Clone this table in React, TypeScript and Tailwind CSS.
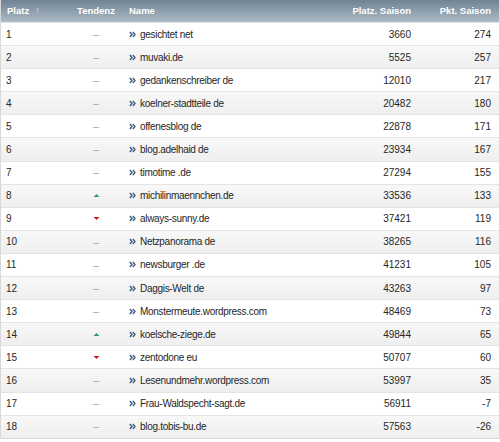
import React from "react";

type Row = { p: number; t: "up" | "down" | "none"; n: string; s: number; k: number };

const rows: Row[] = [
  { p: 1, t: "none", n: "gesichtet net", s: 3660, k: 274 },
  { p: 2, t: "none", n: "muvaki.de", s: 5525, k: 257 },
  { p: 3, t: "none", n: "gedankenschreiber de", s: 12010, k: 217 },
  { p: 4, t: "none", n: "koelner-stadtteile de", s: 20482, k: 180 },
  { p: 5, t: "none", n: "offenesblog de", s: 22878, k: 171 },
  { p: 6, t: "none", n: "blog.adelhaid de", s: 23934, k: 167 },
  { p: 7, t: "none", n: "timotime .de", s: 27294, k: 155 },
  { p: 8, t: "up", n: "michilinmaennchen.de", s: 33536, k: 133 },
  { p: 9, t: "down", n: "always-sunny.de", s: 37421, k: 119 },
  { p: 10, t: "none", n: "Netzpanorama de", s: 38265, k: 116 },
  { p: 11, t: "none", n: "newsburger .de", s: 41231, k: 105 },
  { p: 12, t: "none", n: "Daggis-Welt de", s: 43263, k: 97 },
  { p: 13, t: "none", n: "Monstermeute.wordpress.com", s: 48469, k: 73 },
  { p: 14, t: "up", n: "koelsche-ziege.de", s: 49844, k: 65 },
  { p: 15, t: "down", n: "zentodone eu", s: 50707, k: 60 },
  { p: 16, t: "none", n: "Lesenundmehr.wordpress.com", s: 53997, k: 35 },
  { p: 17, t: "none", n: "Frau-Waldspecht-sagt.de", s: 56911, k: -7 },
  { p: 18, t: "none", n: "blog.tobis-bu.de", s: 57563, k: -26 },
];

const cols = "grid grid-cols-[62px_64px_1fr_92px_83px]";

function Chevron() {
  return (
    <svg width="7" height="7" viewBox="0 0 7 7" className="mr-[4px] shrink-0">
      <path d="M0.8 1 L3 3.5 L0.8 6" fill="none" stroke="#3d5f82" strokeWidth="1.4" />
      <path d="M3.8 1 L6 3.5 L3.8 6" fill="none" stroke="#3d5f82" strokeWidth="1.4" />
    </svg>
  );
}

function Trend({ t }: { t: Row["t"] }) {
  if (t === "up")
    return (
      <svg width="7" height="5" viewBox="0 0 7 5">
        <path d="M0.5 4 L3.5 1 L6.5 4 Z" fill="#2e9a6e" />
      </svg>
    );
  if (t === "down")
    return (
      <svg width="7" height="5" viewBox="0 0 7 5">
        <path d="M0.5 1 L3.5 4 L6.5 1 Z" fill="#c8202a" />
      </svg>
    );
  return <span className="text-[#a5a5a5] text-[11px]">–</span>;
}

export default function App() {
  return (
    <div
      className="w-[500px] h-[442px] bg-white text-[10px] text-[#262626]"
      style={{ fontFamily: '"Liberation Sans", Arial, sans-serif' }}
    >
      <div className="border-x border-b border-[#d8d8d8]">
        <div
          className={`${cols} h-[22px] items-center text-white font-bold text-[9.5px] bg-gradient-to-b from-[#6f8394] to-[#adbbc6]`}
        >
          <div className="pl-[6px] flex items-center">
            Platz
            <span className="ml-[6px] text-[9px] text-[#d7dee4]">↑</span>
          </div>
          <div className="text-center pl-[2px]">Tendenz</div>
          <div className="pl-[2px]">Name</div>
          <div className="text-right pr-[5px]">Platz. Saison</div>
          <div className="text-right pr-[8px]">Pkt. Saison</div>
        </div>
        {rows.map((r, i) => (
          <div
            key={r.p}
            className={`${cols} h-[23.1px] items-center border-t border-[#e4e4e4] ${
              i % 2 === 1 ? "bg-gradient-to-b from-[#f8f8f8] to-[#efefef]" : "bg-white"
            }`}
          >
            <div className="pl-[5px]">{r.p}</div>
            <div className="flex justify-center pl-[2px]">
              <Trend t={r.t} />
            </div>
            <div className="flex items-center pl-[2px]">
              <Chevron />
              <span className="tracking-[-0.3px]">{r.n}</span>
            </div>
            <div className="text-right pr-[5px]">{r.s}</div>
            <div className="text-right pr-[8px]">{r.k}</div>
          </div>
        ))}
      </div>
    </div>
  );
}
